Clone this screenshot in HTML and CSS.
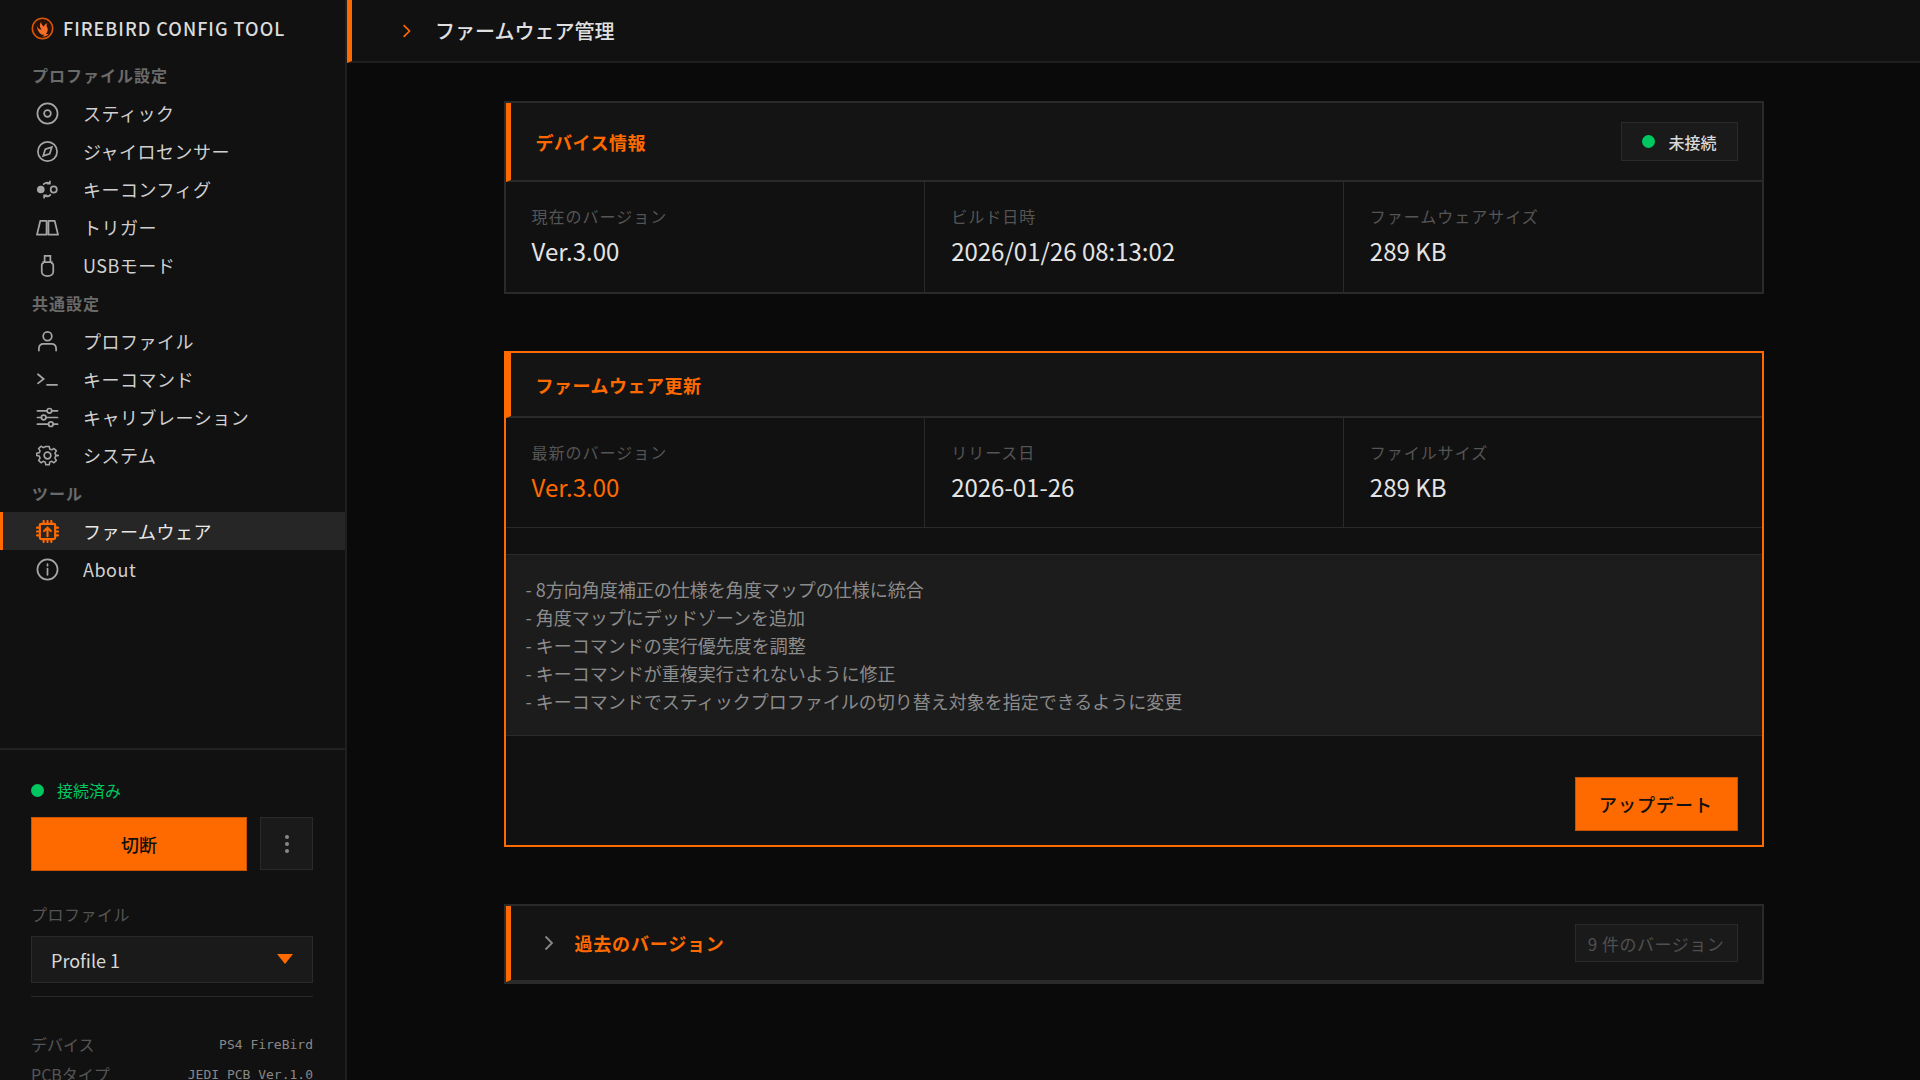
FILE: index.html
```html
<!DOCTYPE html>
<html lang="ja">
<head>
    <meta charset="UTF-8">
    <title>Firebird Config Tool</title>
    <link rel="stylesheet" href="styles.css">
</head>
<body>
    <div class="app">
        <aside class="sidebar">
            <div class="sidebar-top">
                <div class="brand">
                    <svg class="brand-logo" viewBox="0 0 24 24">
                        <circle cx="12" cy="12" r="10.6" fill="#2a1206" stroke="#d9560a" stroke-width="1.6"/>
                        <path d="M6 9c1 3 3 4 5 4-2-2-2.500-5-.5-8 0 3 1.500 4 3 5 .5-1.500 1.500-3 3.500-3.500-1 1.500-1 3 0 4.500 1 2 .5 5-1.500 6.500 1 .5 2 .5 3 0-1.500 2.500-4.500 3.500-7 2.500 1 0 2-.5 2.500-1.500-3 .5-7-2-8-9.500z" fill="#f4702a"/>
                    </svg>
                    <span class="brand-name">FIREBIRD CONFIG TOOL</span>
                </div>
                <nav class="nav">
                    <div class="nav-label">プロファイル設定</div>
                    <a class="nav-item">
                        <svg class="nav-icon" viewBox="0 0 24 24"><circle cx="12" cy="12" r="10.500"/><circle cx="12" cy="12" r="3.500"/></svg>
                        <span>スティック</span>
                    </a>
                    <a class="nav-item">
                        <svg class="nav-icon" viewBox="0 0 24 24"><circle cx="12" cy="12" r="10"/><path d="M16.500 7.500l-2.200 6.800-6.800 2.200 2.200-6.800z"/></svg>
                        <span>ジャイロセンサー</span>
                    </a>
                    <a class="nav-item">
                        <svg class="nav-icon" viewBox="0 0 24 24"><circle cx="5" cy="12" r="4" fill="currentColor" stroke="none"/><circle cx="18.500" cy="12" r="3.200"/><path d="M8 6.500c1.800-1.800 4.500-2 6.500-.8M14.500 3.500v2.500h-2.500M15 17.500c-1.800 1.800-4.500 2-6.500.8M8.500 20.500v-2.500h2.500"/></svg>
                        <span>キーコンフィグ</span>
                    </a>
                    <a class="nav-item">
                        <svg class="nav-icon" viewBox="0 0 24 24"><path d="M4.500 5h6.500v14.500H1zM13 5h6.500l3.500 14.500h-10z" stroke-linejoin="round"/></svg>
                        <span>トリガー</span>
                    </a>
                    <a class="nav-item">
                        <svg class="nav-icon" viewBox="0 0 24 24"><path d="M7.500 9.500v-1h9v1c1 .3 1.500 1 1.500 2v7c0 2.500-2.500 4.500-6 4.500s-6-2-6-4.500v-7c0-1 .5-1.700 1.500-2zM9 8.500v-6.500h6v6.500"/></svg>
                        <span>USBモード</span>
                    </a>

                    <div class="nav-label">共通設定</div>
                    <a class="nav-item">
                        <svg class="nav-icon" viewBox="0 0 24 24"><circle cx="12" cy="6.500" r="4.500"/><path d="M3 21.500v-2c0-3 2-5 5-5h8c3 0 5 2 5 5v2"/></svg>
                        <span>プロファイル</span>
                    </a>
                    <a class="nav-item">
                        <svg class="nav-icon" viewBox="0 0 24 24"><path d="M2 6.500l6 5-6 4.500M11.500 17.500h10.500"/></svg>
                        <span>キーコマンド</span>
                    </a>
                    <a class="nav-item">
                        <svg class="nav-icon" viewBox="0 0 24 24"><path d="M1.500 5h10M16.500 5h6M1.500 12h4M10.500 12h12M1.500 19h11.500M18 19h4.500"/><circle cx="14" cy="5" r="2.400"/><circle cx="8" cy="12" r="2.400"/><circle cx="15.500" cy="19" r="2.400"/></svg>
                        <span>キャリブレーション</span>
                    </a>
                    <a class="nav-item">
                        <svg class="nav-icon" viewBox="0 0 24 24"><circle cx="12" cy="12" r="3.500"/><path d="M10 1.500h4l.6 3 2.300 1 2.600-1.700 2.800 2.800-1.700 2.600 1 2.300 3 .6v0l-3 .6v-.6l-1 2.900 1.700 2.600-2.800 2.800-2.600-1.700-2.300 1-.6 3h-4l-.6-3-2.300-1-2.600 1.700-2.800-2.800 1.700-2.600-1-2.300-3-.6v-2.600l3-.6 1-2.300-1.700-2.600 2.800-2.800 2.600 1.700 2.300-1z" stroke-linejoin="round" transform="translate(1.200 1.200) scale(.9)"/></svg>
                        <span>システム</span>
                    </a>

                    <div class="nav-label">ツール</div>
                    <a class="nav-item active">
                        <svg class="nav-icon" viewBox="0 0 24 24"><rect x="4" y="4" width="16" height="16" rx="1.500"/><path d="M8 1v3M12 1v3M16 1v3M8 20v3M12 20v3M16 20v3M1 8h3M1 12h3M1 16h3M20 8h3M20 12h3M20 16h3"/><path d="M12 17v-9M8.500 11.500l3.500-3.500 3.500 3.500"/></svg>
                        <span>ファームウェア</span>
                    </a>
                    <a class="nav-item">
                        <svg class="nav-icon" viewBox="0 0 24 24"><circle cx="12" cy="12" r="10.500"/><path d="M12 11v6.500M12 6.500v1.500"/></svg>
                        <span>About</span>
                    </a>
                </nav>
            </div>

            <div class="sidebar-bottom">
                <div class="conn-status"><i class="dot"></i>接続済み</div>
                <div class="conn-actions">
                    <button class="btn-orange btn-disconnect">切断</button>
                    <button class="btn-more"><i></i><i></i><i></i></button>
                </div>
                <div class="profile-label">プロファイル</div>
                <div class="profile-select">
                    <span>Profile 1</span>
                    <i class="select-arrow"></i>
                </div>
                <div class="device-info">
                    <div class="device-row"><span>デバイス</span><span class="mono">PS4 FireBird</span></div>
                    <div class="device-row"><span>PCBタイプ</span><span class="mono">JEDI PCB Ver.1.0</span></div>
                </div>
            </div>
        </aside>

        <main class="main">
            <header class="topbar">
                <svg class="topbar-chevron" viewBox="0 0 12 18"><path d="M2 2l7 7-7 7"/></svg>
                <h1>ファームウェア管理</h1>
            </header>

            <div class="content">
                <section class="card">
                    <div class="card-head">
                        <h2>デバイス情報</h2>
                        <div class="status-badge"><i class="dot"></i>未接続</div>
                    </div>
                    <div class="info-grid">
                        <div class="info-cell">
                            <div class="info-label">現在のバージョン</div>
                            <div class="info-value">Ver.3.00</div>
                        </div>
                        <div class="info-cell">
                            <div class="info-label">ビルド日時</div>
                            <div class="info-value">2026/01/26 08:13:02</div>
                        </div>
                        <div class="info-cell">
                            <div class="info-label">ファームウェアサイズ</div>
                            <div class="info-value">289 KB</div>
                        </div>
                    </div>
                </section>

                <section class="card card-update">
                    <div class="card-head">
                        <h2>ファームウェア更新</h2>
                    </div>
                    <div class="info-grid">
                        <div class="info-cell">
                            <div class="info-label">最新のバージョン</div>
                            <div class="info-value orange">Ver.3.00</div>
                        </div>
                        <div class="info-cell">
                            <div class="info-label">リリース日</div>
                            <div class="info-value">2026-01-26</div>
                        </div>
                        <div class="info-cell">
                            <div class="info-label">ファイルサイズ</div>
                            <div class="info-value">289 KB</div>
                        </div>
                    </div>
                    <div class="notes">
                        <p>- 8方向角度補正の仕様を角度マップの仕様に統合</p>
                        <p>- 角度マップにデッドゾーンを追加</p>
                        <p>- キーコマンドの実行優先度を調整</p>
                        <p>- キーコマンドが重複実行されないように修正</p>
                        <p>- キーコマンドでスティックプロファイルの切り替え対象を指定できるように変更</p>
                    </div>
                    <div class="update-actions">
                        <button class="btn-orange btn-update">アップデート</button>
                    </div>
                </section>

                <section class="card card-history">
                    <div class="card-head">
                        <div class="history-title">
                            <svg class="history-chevron" viewBox="0 0 10 16"><path d="M1.500 1.500l6.500 6.500-6.500 6.500"/></svg>
                            <h2>過去のバージョン</h2>
                        </div>
                        <div class="count-badge">9 件のバージョン</div>
                    </div>
                </section>
            </div>
        </main>
    </div>
</body>
</html>
```

FILE: styles.css
```css
* {
    margin: 0;
    padding: 0;
    box-sizing: border-box;
}
body {
    background: #0a0a0a;
    color: #e0e0e0;
    font-family: "Noto Sans CJK JP", "Noto Sans", sans-serif;
    height: 100vh;
    overflow: hidden;
}
.app {
    display: flex;
    height: 1080px;
}

/* sidebar */
.sidebar {
    width: 347px;
    flex-shrink: 0;
    background: #111;
    border-right: 2px solid #1f1f1f;
    overflow: hidden;
}
.sidebar-top {
    height: 748px;
}
.brand {
    display: flex;
    align-items: center;
    height: 56px;
    padding-left: 31px;
}
.brand-logo {
    width: 23px;
    height: 23px;
    margin-right: 9px;
}
.brand-name {
    font-size: 18px;
    font-weight: 500;
    letter-spacing: 1px;
    color: #dcdcdc;
    font-family: "Noto Sans CJK JP", sans-serif;
}
.nav-label {
    height: 38px;
    line-height: 38px;
    padding-left: 32px;
    font-size: 16px;
    font-weight: 700;
    letter-spacing: 1px;
    color: #6a6a6a;
}
.nav-item {
    display: flex;
    align-items: center;
    height: 38px;
    padding-left: 36px;
    font-size: 18px;
    letter-spacing: 0.5px;
    color: #d0d0d0;
}
.nav-icon {
    width: 23px;
    height: 23px;
    margin-right: 24px;
    flex-shrink: 0;
    fill: none;
    stroke: #a6a6a6;
    color: #a6a6a6;
    stroke-width: 1.800;
    stroke-linecap: round;
}
.nav-item.active {
    background: #262626;
    border-left: 3px solid #ff6a00;
    padding-left: 33px;
    color: #e8e8e8;
}
.nav-item.active .nav-icon {
    stroke: #ff6a00;
    stroke-width: 2.200;
}
.sidebar-bottom {
    border-top: 2px solid #222;
    padding: 31px 32px 0 31px;
}
.conn-status {
    display: flex;
    align-items: center;
    height: 18px;
    font-size: 16px;
    color: #00c860;
}
.dot {
    display: block;
    width: 13px;
    height: 13px;
    border-radius: 50%;
    background: #00c860;
    margin-right: 13px;
}
.conn-actions {
    display: flex;
    justify-content: space-between;
    margin-top: 18px;
}
.btn-orange {
    background: #ff6a00;
    border: 1px solid #c85400;
    color: #111;
    font-family: inherit;
    font-weight: 500;
}
.btn-disconnect {
    width: 216px;
    height: 54px;
    font-size: 18px;
}
.btn-more {
    display: flex;
    flex-direction: column;
    align-items: center;
    justify-content: center;
    gap: 3px;
    width: 53px;
    height: 53px;
    background: #1a1a1a;
    border: 1px solid #2a2a2a;
}
.btn-more i {
    width: 4px;
    height: 4px;
    border-radius: 50%;
    background: #888;
}
.profile-label {
    margin-top: 31px;
    font-size: 16px;
    line-height: 24px;
    letter-spacing: 0.5px;
    color: #555;
}
.profile-select {
    display: flex;
    align-items: center;
    justify-content: space-between;
    height: 47px;
    margin-top: 10px;
    padding: 0 19px;
    background: #1a1a1a;
    border: 1px solid #2a2a2a;
    font-size: 18px;
    color: #d8d8d8;
}
.select-arrow {
    width: 0;
    height: 0;
    border-left: 8px solid transparent;
    border-right: 8px solid transparent;
    border-top: 10px solid #ff6a00;
    margin-top: -2px;
}
.device-info {
    margin-top: 13px;
    padding-top: 32px;
    border-top: 1px solid #2a2a2a;
}
.device-row {
    display: flex;
    align-items: center;
    justify-content: space-between;
    height: 30px;
    font-size: 16px;
    color: #555;
}
.mono {
    font-family: "DejaVu Sans Mono", monospace;
    font-size: 13px;
    color: #888;
}

/* main */
.main {
    flex: 1;
    min-width: 0;
}
.topbar {
    display: flex;
    align-items: center;
    height: 63px;
    padding-left: 50px;
    background: #111;
    border-left: 5px solid #ff6a00;
    border-bottom: 2px solid #1f1f1f;
    margin-left: 0;
}
.topbar-chevron {
    width: 10px;
    height: 16px;
    margin-right: 23px;
    fill: none;
    stroke: #ff6a00;
    stroke-width: 2;
}
.topbar h1 {
    font-size: 20px;
    font-weight: 500;
    color: #e0e0e0;
}
.content {
    width: 1260px;
    margin: 38px auto 0;
    transform: translateX(0);
}
.card {
    background: #141414;
    border: 2px solid #2a2a2a;
    margin-bottom: 57px;
}
.card-head {
    display: flex;
    align-items: center;
    justify-content: space-between;
    height: 79px;
    padding: 0 24px 0 25px;
    border-left: 5px solid #ff6a00;
    border-bottom: 2px solid #2a2a2a;
}
.card-head h2 {
    font-size: 18px;
    font-weight: 700;
    letter-spacing: 0.5px;
    color: #ff6a00;
}
.status-badge {
    display: flex;
    align-items: center;
    height: 39px;
    padding: 0 20px;
    background: #1a1a1a;
    border: 1px solid #2a2a2a;
    font-size: 16px;
    font-weight: 500;
    color: #d8d8d8;
}
.info-grid {
    display: grid;
    grid-template-columns: repeat(3, 1fr);
    height: 110px;
    background: #111;
}
.info-cell {
    padding: 21px 26px 0;
    border-left: 1px solid #2a2a2a;
}
.info-cell:first-child {
    border-left: none;
}
.info-label {
    font-size: 16px;
    line-height: 26px;
    letter-spacing: 1px;
    color: #555;
}
.info-value {
    margin-top: 4px;
    font-size: 24px;
    line-height: 36px;
    color: #e4e4e4;
}
.orange {
    color: #ff6a00;
}

/* update card */
.card-update {
    border-color: #ff6a00;
    background: #111;
}
.card-update .card-head {
    height: 65px;
    background: #141414;
}
.card-update .info-grid {
    border-bottom: 1px solid #2a2a2a;
}
.notes {
    margin-top: 26px;
    padding: 20px 20px;
    background: #1c1c1c;
    border-top: 1px solid #2a2a2a;
    border-bottom: 1px solid #2a2a2a;
    font-size: 18px;
    line-height: 28px;
    color: #8c8c8c;
}
.update-actions {
    display: flex;
    justify-content: flex-end;
    padding: 41px 24px 14px 0;
}
.btn-update {
    width: 163px;
    height: 54px;
    font-size: 18px;
    letter-spacing: 1px;
}

/* history */
.card-history .card-head {
    height: 76px;
    padding-left: 33px;
}
.history-title {
    display: flex;
    align-items: center;
}
.history-chevron {
    width: 10px;
    height: 16px;
    margin-right: 21px;
    fill: none;
    stroke: #888;
    stroke-width: 1.800;
}
.card-history h2 {
    font-size: 18px;
    letter-spacing: 0.8px;
}
.count-badge {
    display: flex;
    align-items: center;
    justify-content: center;
    width: 163px;
    height: 38px;
    background: #1a1a1a;
    border: 1px solid #2a2a2a;
    font-size: 17px;
    letter-spacing: 0.5px;
    color: #505050;
}
```
